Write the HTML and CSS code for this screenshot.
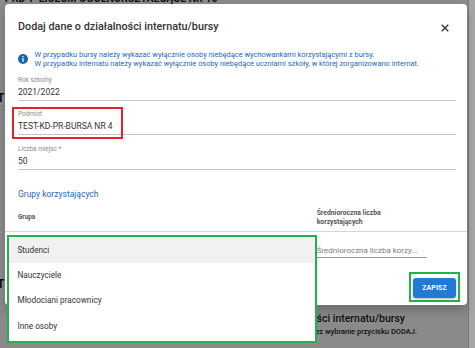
FILE: index.html
```html
<!DOCTYPE html>
<html lang="pl">
<head>
<meta charset="utf-8">
<title>Dodaj dane o działalności internatu/bursy</title>
<link rel="stylesheet" href="styles.css">
</head>
<body>
<div class="page">
  <div class="page-title">T KD-P LICEUM OGOLNOKSZTAŁCĄCE NR 10</div>
  <div class="page-row row-a">T</div>
  <div class="page-row row-b">T</div>
  <div class="page-section">
    <div class="sec-title">Dane o działalności internatu/bursy</div>
    <div class="sec-sub">Dane można dodać przez wybranie przycisku DODAJ.</div>
  </div>
</div>
<div class="backdrop"></div>
<div class="scrollbar"></div>

<div class="dialog">
  <div class="dialog-head">
    <div class="dialog-title">Dodaj dane o działalności internatu/bursy</div>
    <svg class="close" width="8" height="8" viewBox="0 0 8 8"><path d="M0.7 0.7L7.3 7.3M7.3 0.7L0.7 7.3" stroke="#333" stroke-width="1.3" fill="none"/></svg>
  </div>
  <div class="info">
    <svg class="info-icon" width="10" height="10" viewBox="0 0 10 10"><circle cx="5" cy="5" r="5" fill="#1a63ad"/><rect x="4.35" y="4.2" width="1.3" height="3.6" fill="#fff"/><circle cx="5" cy="2.8" r="0.75" fill="#fff"/></svg>
    <div class="info-text">
      <div>W przypadku bursy należy wykazać wyłącznie osoby niebędące wychowankami korzystającymi z bursy.</div>
      <div>W przypadku internatu należy wykazać wyłącznie osoby niebędące uczniami szkoły, w której zorganizowano internat.</div>
    </div>
  </div>
  <div class="fields">
    <div class="field">
      <div class="label">Rok szkolny</div>
      <div class="value">2021/2022</div>
    </div>
    <div class="field">
      <div class="label">Podmiot</div>
      <div class="value">TEST-KD-PR-BURSA NR 4</div>
    </div>
    <div class="field">
      <div class="label">Liczba miejsc *</div>
      <div class="value">50</div>
    </div>
  </div>
  <div class="group-title">Grupy korzystających</div>
  <div class="table-head">
    <div class="col-group">Grupa</div>
    <div class="col-avg">Średnioroczna liczba<br>korzystających</div>
  </div>
  <div class="table-row">
    <div class="col-group"></div>
    <div class="col-avg"><div class="input-ph">Średnioroczna liczba korzy...</div></div>
  </div>
  <div class="footer">
    <button class="btn-save">ZAPISZ</button>
  </div>
</div>

<div class="menu">
  <div class="menu-item active">Studenci</div>
  <div class="menu-item">Nauczyciele</div>
  <div class="menu-item">Młodociani pracownicy</div>
  <div class="menu-item">Inne osoby</div>
</div>

<div class="mark mark-red"></div>
<div class="mark mark-btn"></div>
</body>
</html>
```

FILE: styles.css
```css
html, body {
  margin: 0;
  padding: 0;
}
body {
  width: 475px;
  height: 348px;
  overflow: hidden;
  position: relative;
  background: #fff;
  font-family: Roboto, "Liberation Sans", sans-serif;
  color: #333;
}

/* background page */
.page {
  display: flex;
  flex-direction: column;
}
.page-title {
  margin-top: -8px;
  padding-left: 3px;
  font-size: 10.5px;
  font-weight: 700;
  line-height: 14px;
  white-space: nowrap;
  color: #222;
}
.page-row {
  font-size: 12px;
  font-weight: 700;
  line-height: 14px;
  margin-left: -3px;
  color: #222;
}
.row-a { margin-top: 85px; }
.row-b { margin-top: 172px; }
.page-section {
  margin-top: 21px;
  width: 405px;
  text-align: right;
  white-space: nowrap;
}
.sec-title {
  font-size: 10.5px;
  font-weight: 500;
  line-height: 13px;
  color: #222;
}
.sec-sub {
  width: 417px;
  margin-top: 1.5px;
  font-size: 7.5px;
  font-weight: 500;
  line-height: 9px;
  color: #222;
}

.backdrop {
  position: absolute;
  inset: 0;
  background: rgba(0, 0, 0, 0.46);
}
.scrollbar {
  position: absolute;
  top: 0;
  right: 0;
  width: 6px;
  height: 348px;
  background: #a6a6a6;
  border-left: 1px solid #7a7a7a;
}

/* dialog */
.dialog {
  position: absolute;
  left: 5px;
  top: 4px;
  width: 462px;
  height: 301px;
  box-sizing: border-box;
  padding: 16px 11px 7px 13px;
  background: #fff;
  border-radius: 4px;
  display: flex;
  flex-direction: column;
  box-shadow: 0 6px 10px rgba(0, 0, 0, 0.2);
}
.dialog-head {
  display: flex;
  align-items: center;
  justify-content: space-between;
  height: 14px;
}
.dialog-title {
  font-size: 10.8px;
  font-weight: 500;
  line-height: 14px;
  color: #333;
  white-space: nowrap;
}
.close {
  margin-right: 7px;
  margin-top: 2px;
}

.info {
  margin-top: 16px;
  display: flex;
  align-items: center;
  gap: 6.5px;
}
.info-icon {
  flex: none;
}
.info-text {
  font-size: 7.45px;
  line-height: 9px;
  color: #1f68b5;
  white-space: nowrap;
}

.fields {
  margin-top: 8.5px;
  display: flex;
  flex-direction: column;
  gap: 10.5px;
}
.field {
  border-bottom: 1px solid #c4c4c4;
  padding-bottom: 2px;
}
.label {
  font-size: 6.4px;
  line-height: 7px;
  color: #8a8a8a;
}
.value {
  margin-top: 2px;
  font-size: 8.5px;
  line-height: 12px;
  color: #333;
}

.group-title {
  margin-top: 18.5px;
  font-size: 8.5px;
  line-height: 12px;
  color: #1f68b5;
}

.table-head,
.table-row {
  display: flex;
  margin-left: -13px;
  margin-right: -11px;
  padding-left: 13px;
}
.table-head {
  padding-top: 8.5px;
  padding-bottom: 4.5px;
  align-items: center;
  border-bottom: 1px solid #d6d6d6;
}
.col-group {
  width: 298.7px;
  flex: none;
}
.table-head .col-group,
.table-head .col-avg {
  font-size: 6.4px;
  font-weight: 700;
  line-height: 9px;
  color: #555;
}
.table-head .col-avg {
  font-size: 6.8px;
}
.input-ph {
  margin-top: 13px;
  width: 110px;
  font-size: 8px;
  line-height: 12px;
  color: #7a7a7a;
  border-bottom: 1px solid #9a9a9a;
  white-space: nowrap;
}

.footer {
  margin-top: auto;
  display: flex;
  justify-content: flex-end;
}
.btn-save {
  width: 43px;
  height: 20px;
  border: none;
  border-radius: 3px;
  background: #2279d6;
  color: #fff;
  font-family: Roboto, "Liberation Sans", sans-serif;
  font-size: 6.8px;
  font-weight: 700;
  letter-spacing: 0.2px;
  padding: 0;
  box-shadow: 0 1px 3px rgba(0, 0, 0, 0.3);
}

/* dropdown overlay */
.menu {
  position: absolute;
  left: 6.5px;
  top: 234.5px;
  width: 310.5px;
  height: 108.5px;
  box-sizing: border-box;
  border: 2.5px solid #22b14c;
  background: #fff;
  display: flex;
  flex-direction: column;
}
.menu-item {
  height: 25.5px;
  line-height: 25.5px;
  padding-left: 9px;
  font-size: 8.2px;
  color: #333;
  white-space: nowrap;
}
.menu-item.active {
  height: 26px;
  line-height: 26px;
  background: #f1f1f1;
}

/* annotations */
.mark {
  position: absolute;
  box-sizing: border-box;
  border-width: 2.5px;
  border-style: solid;
}
.mark-red {
  left: 12.3px;
  top: 106.7px;
  width: 110.4px;
  height: 32.3px;
  border-color: #e5232b;
}
.mark-btn {
  left: 409px;
  top: 272px;
  width: 51px;
  height: 30px;
  border-color: #22b14c;
}
```
